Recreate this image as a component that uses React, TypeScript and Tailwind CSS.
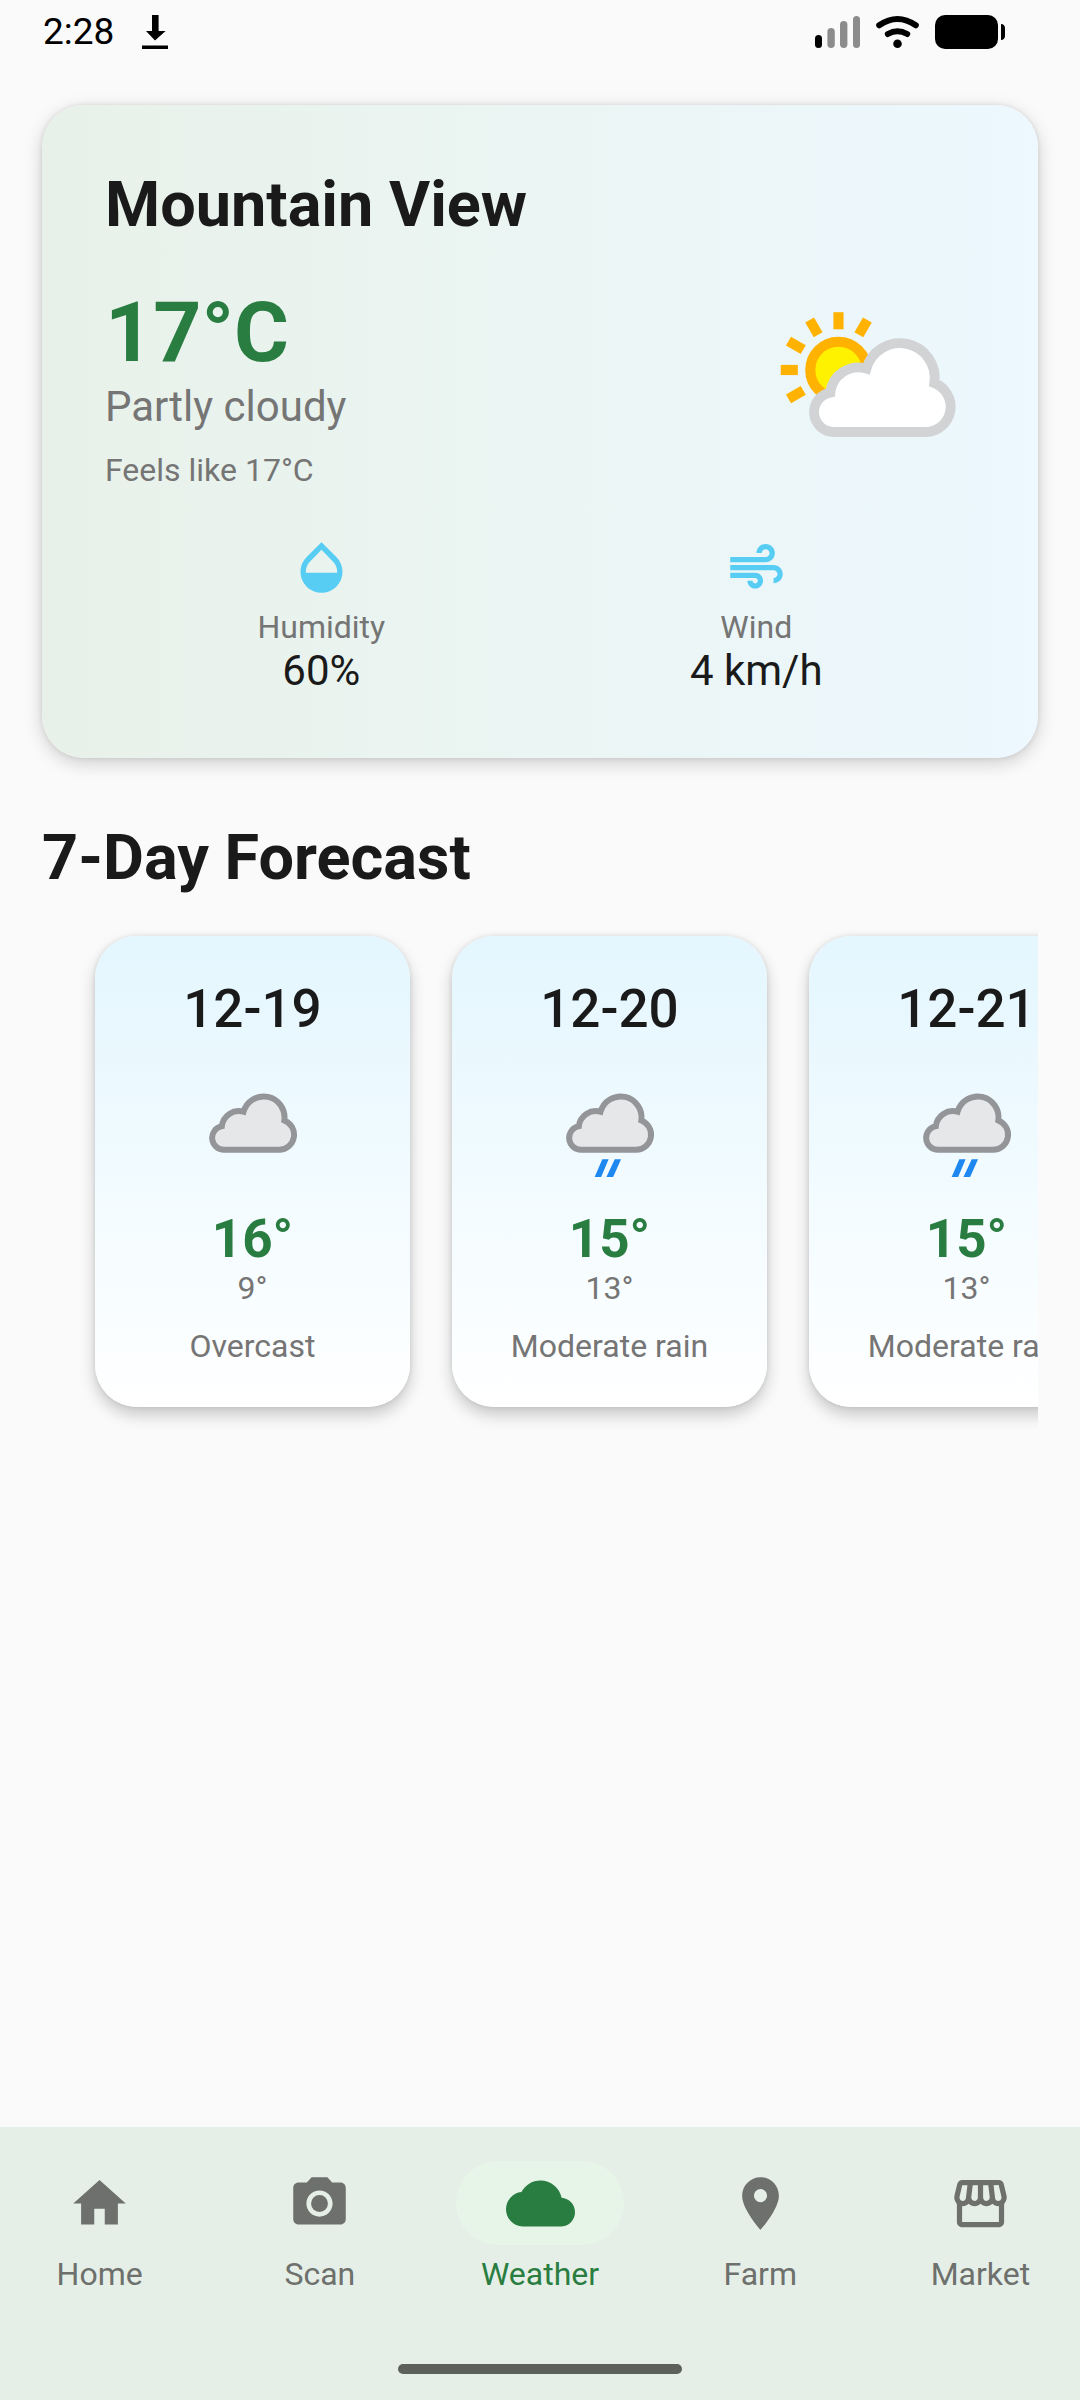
import { MdAir, MdCameraAlt, MdCloud, MdHome, MdLocationOn, MdOpacity, MdOutlineStorefront } from "react-icons/md";

const CLOUD =
  "M21.1 45.1A6.05 6.05 0 0 1 19.9 33.1A8.6 8.6 0 0 1 30.9 25.8A10.6 10.6 0 0 1 51.6 30.2A7.7 7.7 0 0 1 49 45.1Z";

const days = [
  { date: "12-19", high: "16°", low: "9°", text: "Overcast", rain: false },
  { date: "12-20", high: "15°", low: "13°", text: "Moderate rain", rain: true },
  { date: "12-21", high: "15°", low: "13°", text: "Moderate rain", rain: true },
];

const tabs = [
  { label: "Home", Icon: MdHome, active: false },
  { label: "Scan", Icon: MdCameraAlt, active: false },
  { label: "Weather", Icon: MdCloud, active: true },
  { label: "Farm", Icon: MdLocationOn, active: false },
  { label: "Market", Icon: MdOutlineStorefront, active: false },
];

function PartlyCloudyIcon() {
  return (
    <svg viewBox="0 0 64 64" className="size-[210px] shrink-0" aria-hidden="true">
      <g stroke="#ffb300" strokeWidth="3.1">
        <circle cx="22.4" cy="26.2" r="8.6" fill="#fff200" />
        {[-120, -90, -60, -30, 0, 30].map((deg) => (
          <path key={deg} d="M22.4 8.6v5.2" transform={`rotate(${deg} 22.4 26.2)`} />
        ))}
      </g>
      <path d={CLOUD} fill="#fff" stroke="#d1d3d4" strokeWidth="3" />
    </svg>
  );
}

function CloudIcon({ rain }: { rain: boolean }) {
  return (
    <svg viewBox="0 0 64 64" className="mt-[21px] size-[126px]" aria-hidden="true">
      <path d={CLOUD} transform="translate(-3.7 0)" fill="#e6e7e8" stroke="#939598" strokeWidth="3" />
      {rain && <path d="M28.1 49.9h3.2l-3.8 9h-3.3zM34.4 49.9h3.2l-4 9h-3.4z" fill="#1e88f0" />}
    </svg>
  );
}

function StatusBar() {
  return (
    <header className="flex h-[63px] items-center justify-between pr-[75px] pl-[43px] text-black">
      <div className="flex items-center gap-[28px]">
        <span className="text-[37px] leading-[44px]">2:28</span>
        <svg viewBox="0 0 26 34" className="h-[34px] w-[26px]" aria-hidden="true">
          <path d="M10 0h6.6v16h7L13 25.5 4 16h6zM0 30.5h26V34H0z" />
        </svg>
      </div>
      <div className="flex items-center gap-[16px]">
        {/* 電波 */}
        <svg viewBox="0 0 45 34" className="h-[34px] w-[45px]" aria-hidden="true">
          <rect x="0" y="20" width="7" height="13" rx="3.5" />
          <g fill="#8c8c8c">
            <rect x="12.4" y="13" width="7.4" height="20" rx="3.7" />
            <rect x="25" y="6" width="7.4" height="27" rx="3.7" />
            <rect x="38" y="1" width="7" height="32" rx="3.5" />
          </g>
        </svg>
        {/* Wi-Fi */}
        <svg viewBox="0 0 43 34" className="h-[34px] w-[43px]" aria-hidden="true">
          <g fill="none" stroke="#000" strokeWidth="6" strokeLinecap="round">
            <path d="M3.2 10.3Q21.5-2.3 39.8 10.3" />
            <path d="M11.8 19Q21.5 13.4 31.2 19" />
          </g>
          <circle cx="21.5" cy="28.7" r="4.3" />
        </svg>
        {/* バッテリー */}
        <svg viewBox="0 0 70 34" className="h-[34px] w-[70px]" aria-hidden="true">
          <rect width="63" height="34" rx="10" />
          <path d="M66 9c2.6 0 4 2 4 4v8c0 2-1.4 4-4 4z" />
        </svg>
      </div>
    </header>
  );
}

export default function App() {
  return (
    <div className="flex min-h-screen flex-col bg-[#fafafa] font-['Roboto',sans-serif] text-[#1a1a1a]">
      <StatusBar />

      <main className="flex-1 px-[42px] pt-[42px]">
        {/* 現在の天気 */}
        <section className="rounded-[42px] bg-linear-to-r from-[#e8f1e9] via-[#ebf5f3] to-[#edf8ff] p-[63px] shadow-[0_5px_18px_rgba(0,0,0,0.18),0_0_5px_rgba(0,0,0,0.1)]">
          <h1 className="text-[63px] leading-[74px] font-bold">Mountain View</h1>
          <div className="mt-[42px] flex items-start justify-between">
            <div className="text-[#757575]">
              <p className="text-[84px] leading-[98px] font-bold text-[#2a7d41]">17°C</p>
              <p className="text-[42px] leading-[49px]">Partly cloudy</p>
              <p className="mt-[21px] text-[32px] leading-[37px]">Feels like 17°C</p>
            </div>
            <PartlyCloudyIcon />
          </div>
          <div className="mt-[42px] flex justify-around">
            <div className="flex flex-col items-center">
              <MdOpacity className="size-[63px] text-[#57cdf4]" />
              <p className="mt-[10px] text-[32px] leading-[37px] text-[#757575]">Humidity</p>
              <p className="text-[42px] leading-[49px]">60%</p>
            </div>
            <div className="flex flex-col items-center">
              <MdAir className="size-[63px] text-[#57cdf4]" />
              <p className="mt-[10px] text-[32px] leading-[37px] text-[#757575]">Wind</p>
              <p className="text-[42px] leading-[49px]">4 km/h</p>
            </div>
          </div>
        </section>

        {/* 週間予報 */}
        <h2 className="mt-[63px] text-[63px] leading-[73px] font-bold">7-Day Forecast</h2>
        <div className="mt-[21px] flex gap-[42px] overflow-x-auto pt-[21px] pb-[42px] pl-[53px] [scrollbar-width:none]">
          {days.map((day) => (
            <article
              key={day.date}
              className="flex w-[315px] shrink-0 flex-col items-center rounded-[42px] bg-linear-to-b from-[#e4f6fe] via-[#f1fbff] to-white py-[42px] shadow-[0_8px_16px_rgba(0,0,0,0.2),0_0_5px_rgba(0,0,0,0.1)]"
            >
              <h3 className="text-[53px] leading-[62px] font-medium">{day.date}</h3>
              <CloudIcon rain={day.rain} />
              <p className="mt-[21px] text-[53px] leading-[62px] font-bold text-[#2a7d41]">{day.high}</p>
              <p className="text-[32px] leading-[37px] text-[#757575]">{day.low}</p>
              <p className="mt-[21px] text-[32px] leading-[37px] text-[#757575]">{day.text}</p>
            </article>
          ))}
        </div>
      </main>

      <nav className="bg-[#e6efe7] pt-[34px] pb-[26px]">
        <div className="flex gap-[21px]">
          {tabs.map(({ label, Icon, active }) => (
            <button
              key={label}
              type="button"
              className={`flex flex-1 flex-col items-center gap-2 ${active ? "text-[#2a7d41]" : "text-[#6d706c]"}`}
            >
              <span
                className={`flex h-[84px] w-[168px] items-center justify-center rounded-full ${active ? "bg-[#e7f5e8]" : ""}`}
              >
                <Icon className={active ? "size-[69px]" : "size-[63px]"} />
              </span>
              <span className="text-[32px] leading-[42px]">{label}</span>
            </button>
          ))}
        </div>
        <div className="mx-auto mt-[69px] h-[10px] w-[284px] rounded-full bg-[#5c615c]" />
      </nav>
    </div>
  );
}
